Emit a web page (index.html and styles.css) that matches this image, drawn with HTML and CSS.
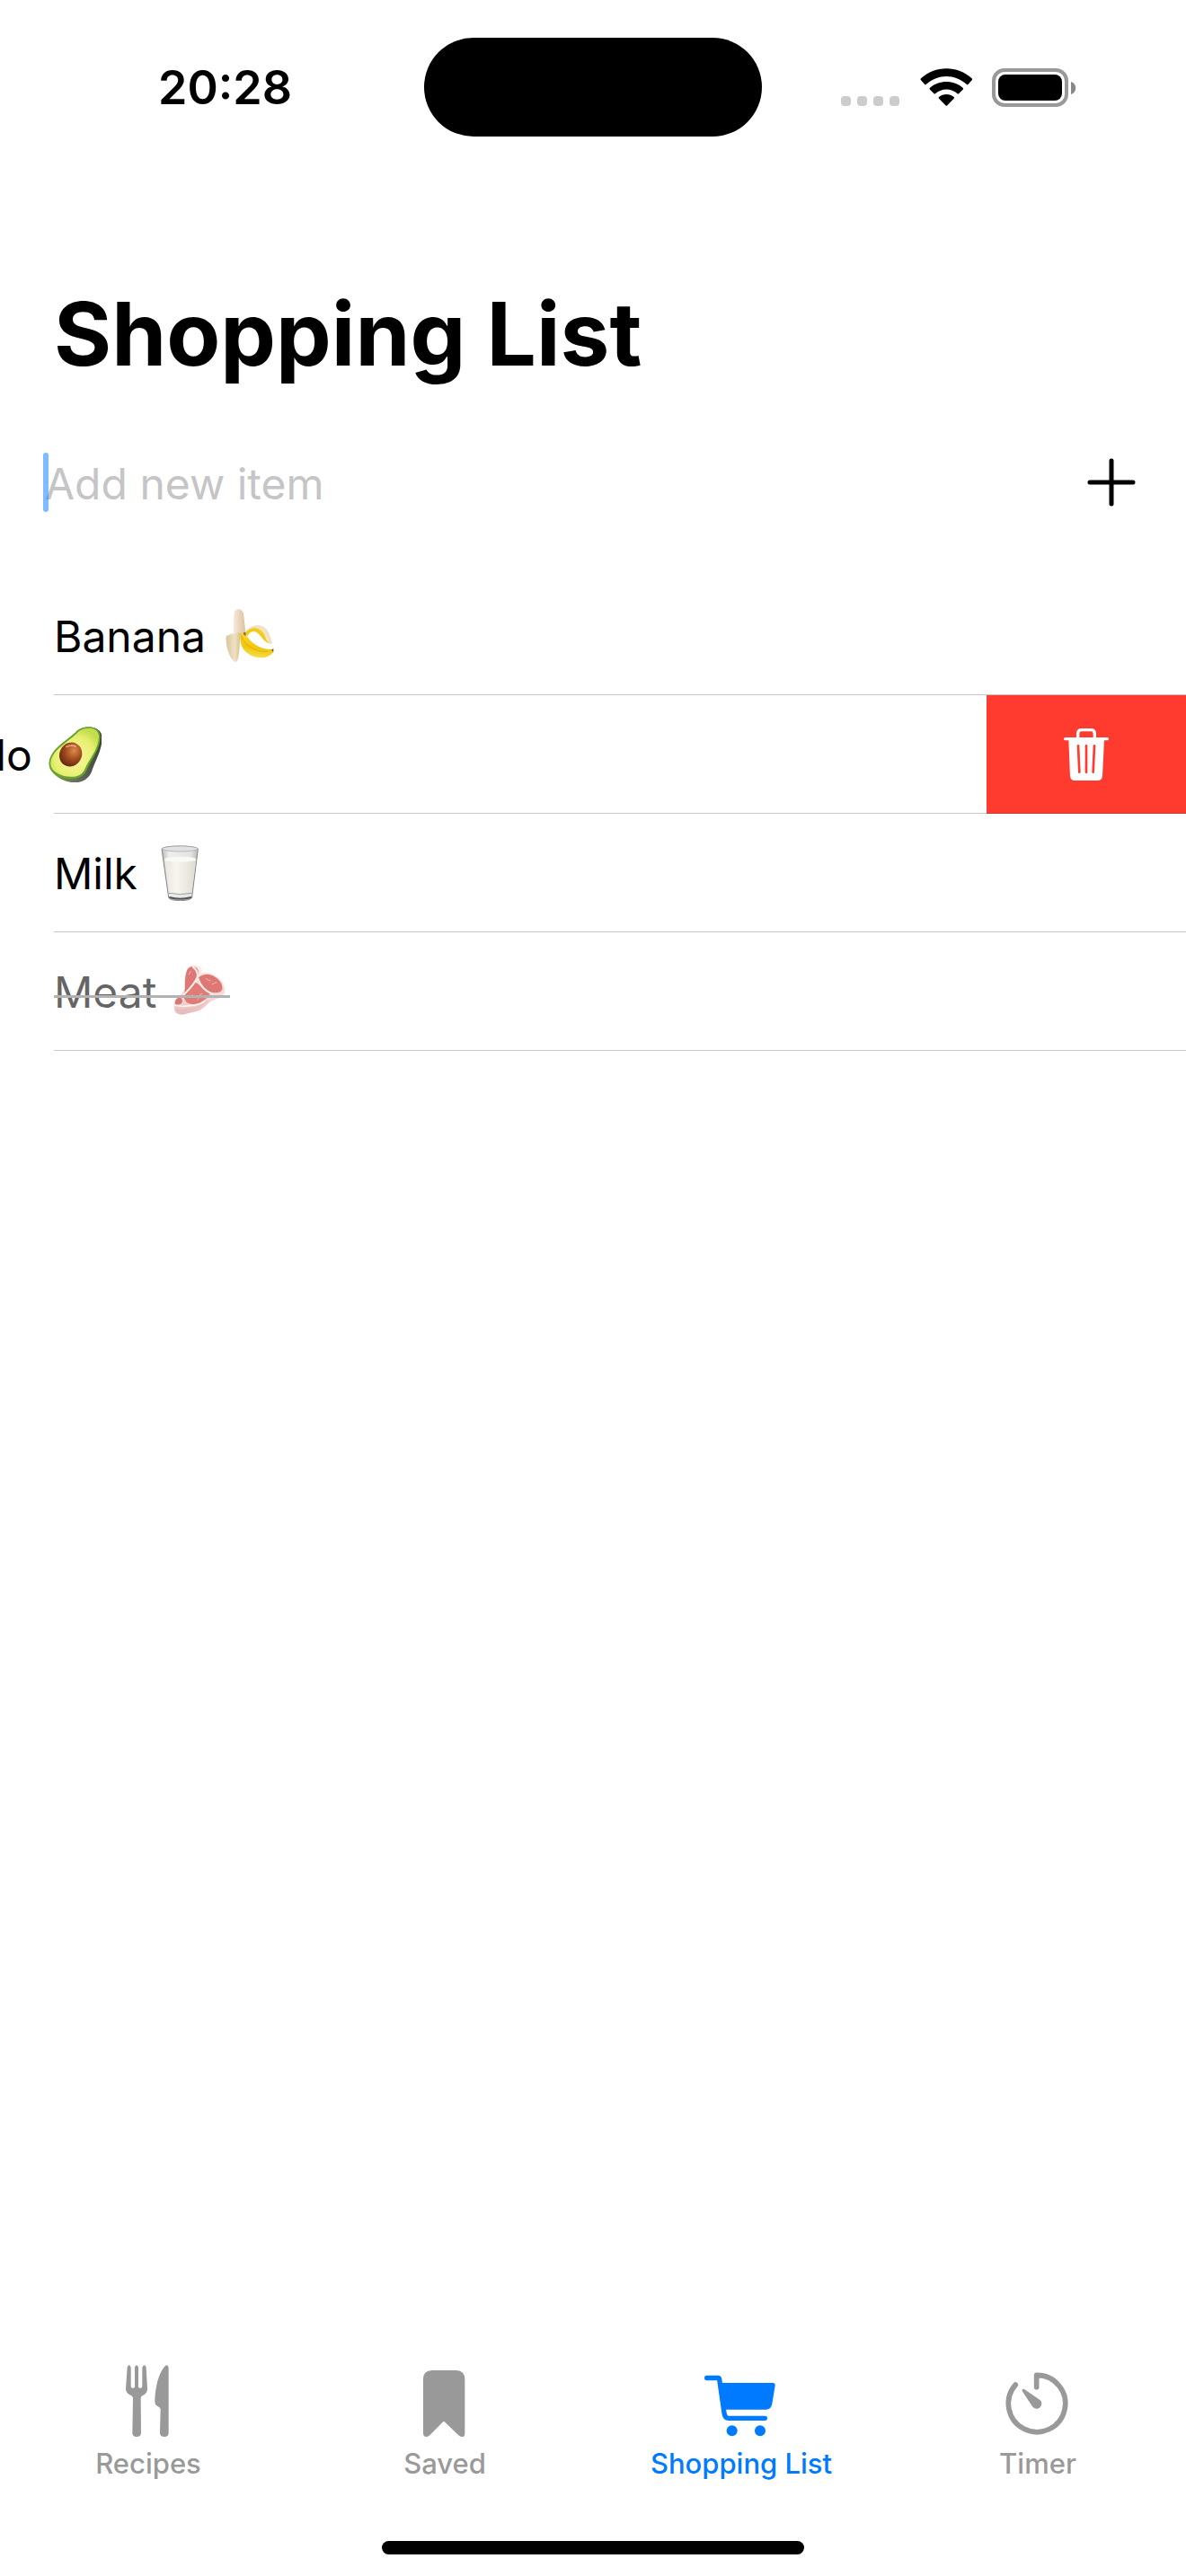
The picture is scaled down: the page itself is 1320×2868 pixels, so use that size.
FILE: index.html
```html
<!DOCTYPE html>
<html lang="en">
<head>
<meta charset="utf-8">
<meta name="viewport" content="width=device-width, initial-scale=1">
<title>Shopping List</title>
<link rel="stylesheet" href="styles.css">
</head>
<body>
<header class="status">
  <time class="clock">20:28</time>
  <div class="island"></div>
  <div class="indicators">
    <svg class="cellular" width="66" height="12" viewBox="0 0 66 12" fill="#ccc" aria-hidden="true">
      <rect x="0" width="11" height="11" rx="4"/><rect x="18" width="11" height="11" rx="4"/><rect x="36" width="11" height="11" rx="4"/><rect x="54" width="11" height="11" rx="4"/>
    </svg>
    <svg width="58" height="43" viewBox="0 0 174 129" aria-hidden="true">
      <path d="M3 40Q0 37 3 34C51-10 125-10 173 34Q176 37 173 40L161 53Q158 56 155 53C116 18 60 18 21 53Q18 56 15 53Z"/>
      <path d="M33 71Q30 68 33 65C63 38 113 38 143 65Q146 68 143 71L130 84Q127 87 124 84C103 66 73 66 52 84Q49 87 46 84Z"/>
      <path d="M63 101Q60 98 63 96C77 84 99 84 113 96Q116 98 113 101L91 124Q88 127 85 124Z"/>
    </svg>
    <svg width="94" height="43" viewBox="0 0 94 43" aria-hidden="true">
      <rect x="2" y="2" width="81" height="39" rx="12" fill="none" stroke="#999" stroke-width="4"/>
      <rect x="7" y="7" width="71" height="29" rx="8"/>
      <path d="M88 15C95 17 95 27 88 29Z" fill="#888"/>
    </svg>
  </div>
</header>

<main class="content">
  <h1 class="title">Shopping List</h1>

  <form class="add">
    <div class="field">
      <input class="add-input" type="text" placeholder="Add new item" aria-label="Add new item">
      <span class="caret"></span>
    </div>
    <button class="add-button" type="button" aria-label="Add">
      <svg width="54" height="54" viewBox="0 0 54 54" fill="none" stroke="#000" stroke-width="5" stroke-linecap="round"><path d="M27 3V51M3 27H51"/></svg>
    </button>
  </form>

  <ul class="items">
    <li class="item">
      <span class="label">Banana
        <svg class="emoji" viewBox="0 0 180 186" role="img" aria-label="banana">
          <defs>
            <linearGradient id="flesh" x1="0" x2="1"><stop offset="0" stop-color="#f6ead9"/><stop offset="1" stop-color="#dcbf9f"/></linearGradient>
            <linearGradient id="inner" x1="0" x2="1"><stop offset="0" stop-color="#d9c49c"/><stop offset=".6" stop-color="#efe2c4"/><stop offset="1" stop-color="#d7bf8e"/></linearGradient>
            <linearGradient id="skin" x1=".6" y1="0" x2=".4" y2="1"><stop offset="0" stop-color="#fbdc3a"/><stop offset=".6" stop-color="#f2c60d"/><stop offset="1" stop-color="#f5e14b"/></linearGradient>
          </defs>
          <path d="M44 16C47 0 70-1 75 18C78 38 79 62 84 92L66 96L43 88C41 62 40 38 44 16Z" fill="url(#flesh)"/>
          <path d="M82 80C100 54 140 44 161 84L171 117Q168 122 160 117C150 91 126 70 108 69C98 70 91 80 84 89Z" fill="#f1e2c5"/>
          <path d="M82 82C96 62 122 62 138 80C150 92 148 110 166 118C140 118 134 84 112 78C100 76 94 84 88 94Z" fill="#f5c918"/>
          <path d="M64 83L82 85C94 113 128 138 164 138L174 138L175 146C158 172 113 171 88 151C68 136 61 109 64 83Z" fill="url(#skin)"/>
          <path d="M68 92C80 128 116 148 156 145" fill="none" stroke="#e0ac08" stroke-width="4" opacity=".6"/>
          <path d="M17 94C34 86 51 82 65 83C61 103 65 145 55 174Q50 184 42 177C25 159 15 127 17 94Z" fill="url(#inner)"/>
          <path d="M65 83L75 105L68 110Z" fill="#edb90d"/>
          <path d="M74 82L82 80L84 92L76 90Z" fill="#8c7a3b"/>
          <path d="M169 138L175 136L175 146L171 145Z" fill="#6c5d2c"/>
        </svg></span>
    </li>
    <li class="item">
      <span class="label swiped">Avocado
        <svg class="emoji" viewBox="0 0 180 186" role="img" aria-label="avocado">
          <defs>
            <radialGradient id="pulp" cx=".5" cy=".6" r=".6"><stop offset="0" stop-color="#fbf6a0"/><stop offset=".7" stop-color="#e6f070"/><stop offset="1" stop-color="#c3dd4d"/></radialGradient>
            <radialGradient id="pit" cx=".55" cy=".3" r=".7"><stop offset="0" stop-color="#de8a4f"/><stop offset=".5" stop-color="#a54e20"/><stop offset="1" stop-color="#632710"/></radialGradient>
            <linearGradient id="rind" x1="0" x2="1"><stop offset="0" stop-color="#74a82c"/><stop offset=".5" stop-color="#6b6f62"/><stop offset="1" stop-color="#3a4436"/></linearGradient>
          </defs>
          <path d="M100 13C122-4 177-5 182 34C183 79 156 118 147 151C130 190 87 194 50 178C22 164 4 145 5 123C9 72 70 46 100 13Z" fill="url(#rind)"/>
          <path d="M100 12C122-5 173-6 176 31C178 75 144 112 131 144C117 177 82 178 48 170C20 160 4 145 5 121C9 71 70 45 100 12Z" fill="#69a22c"/>
          <path d="M102 17C124 0 168-1 171 31C173 72 138 108 125 140C113 170 80 171 52 164C25 156 8 141 10 120C14 75 76 48 102 17Z" fill="url(#pulp)"/>
          <ellipse cx="77" cy="93" rx="37" ry="41" transform="rotate(28 77 93)" fill="url(#pit)"/>
          <path d="M63 67Q79 59 93 66" fill="none" stroke="#f3b98b" stroke-width="6" stroke-linecap="round" opacity=".7"/>
        </svg></span>
      <button class="delete" type="button" aria-label="Delete">
        <svg width="50" height="58" viewBox="0 0 150 174" aria-hidden="true">
          <path d="M47 33V17Q47 5 59 5H91Q103 5 103 17V33" fill="none" stroke="#fff" stroke-width="10"/>
          <path d="M5 35H145" stroke="#fff" stroke-width="10" stroke-linecap="round"/>
          <path d="M16 37H135L129 158Q128 174 113 174H37Q22 174 21 158Z" fill="#fff"/>
          <path d="M48 58L52 146M75 58V146M102 58L98 146" stroke="#ff3b30" stroke-width="8" stroke-linecap="round"/>
        </svg>
      </button>
    </li>
    <li class="item">
      <span class="label">Milk
        <svg class="emoji" viewBox="0 0 180 186" role="img" aria-label="glass of milk">
          <defs>
            <linearGradient id="glass" x1="0" x2="1"><stop offset="0" stop-color="#b9b9b9"/><stop offset=".2" stop-color="#eee"/><stop offset=".8" stop-color="#e4e4e4"/><stop offset="1" stop-color="#bbb"/></linearGradient>
            <linearGradient id="milk" x1="0" x2="1"><stop offset="0" stop-color="#e9e7e0"/><stop offset=".4" stop-color="#f7f5ee"/><stop offset="1" stop-color="#dedbd1"/></linearGradient>
          </defs>
          <path d="M30 12C42 0 139 0 151 12L131 174Q129 184 92 185Q54 184 53 174Z" fill="url(#glass)" stroke="#858585" stroke-width="3"/>
          <path d="M39 47Q91 32 145 47L130 161Q91 168 55 161Z" fill="url(#milk)"/>
          <ellipse cx="92" cy="47" rx="52" ry="9" fill="#faf9f5"/>
          <path d="M54 160Q92 168 130 160" fill="none" stroke="#777" stroke-width="2"/>
          <path d="M55 174Q92 185 129 174" fill="none" stroke="#555" stroke-width="6"/>
          <ellipse cx="91" cy="12" rx="60" ry="9" fill="#e2e2e2" stroke="#a2a2a2" stroke-width="2"/>
        </svg></span>
    </li>
    <li class="item">
      <span class="label done">Meat
        <svg class="emoji" viewBox="0 0 180 186" role="img" aria-label="cut of meat">
          <defs>
            <linearGradient id="fat" x1="0" y1="0" x2="0" y2="1"><stop offset="0" stop-color="#ffe0d8"/><stop offset=".7" stop-color="#f3bdb7"/><stop offset="1" stop-color="#d08a8a"/></linearGradient>
          </defs>
          <path d="M56 9C67-2 88 5 99 18L97 31C119 22 149 39 166 60Q179 80 173 99C166 118 139 115 121 131C106 145 92 158 69 161L34 170Q8 169 6 152L5 130C15 108 36 98 42 84C38 54 43 26 56 9Z" fill="url(#fat)"/>
          <path d="M49 20C58 4 82 6 86 24C90 42 72 71 52 88L38 98C46 84 36 50 49 20Z" fill="#c9201b"/>
          <path d="M92 42C121 24 152 45 163 66C173 91 160 98 138 97C116 95 98 78 88 64C82 54 84 47 92 42Z" fill="#c9201b"/>
          <path d="M74 62C90 62 106 96 126 99C112 123 88 137 65 135C42 134 41 117 34 106Z" fill="#cc241f"/>
          <path d="M9 124C18 106 31 111 33 124C34 136 14 140 9 134Z" fill="#c2201c"/>
          <path d="M38 103C62 80 77 61 83 44Q86 24 69 11M85 49C93 77 112 92 132 101" fill="none" stroke="#ffe6df" stroke-width="6" stroke-linecap="round"/>
          <path d="M6 138Q36 145 56 140Q90 139 108 123" fill="none" stroke="#fff0ea" stroke-width="5"/>
          <path d="M10 155Q37 158 61 151Q92 147 119 124" fill="none" stroke="#d68989" stroke-width="3"/>
          <path d="M112 50L126 57M133 68L147 62M66 104L70 110M91 103L99 100M55 35L61 25M83 121L87 115" stroke="#ed8884" stroke-width="3" stroke-linecap="round"/>
        </svg></span>
    </li>
  </ul>
</main>

<nav class="tabs">
  <a class="tab" href="#recipes">
    <svg class="tab-icon" viewBox="0 0 240 240" aria-hidden="true">
      <path d="M50 8Q56-6 62 8V72Q62 77 67 77H70Q75 77 75 72V8Q81-6 87 8V72Q87 77 92 77H95Q100 77 100 72V8Q107-6 113 8L117 80Q117 96 100 103Q95 106 95 112L96 228Q95 240 81 240Q68 240 67 228L69 112Q69 106 64 103Q45 94 45 80Z"/>
      <path d="M188 8V228Q187 240 174 240Q160 240 159 228L161 149Q161 144 157 142L150 137Q141 132 142 116C144 71 155 29 174 6Q183-5 188 8Z"/>
    </svg>
    Recipes
  </a>
  <a class="tab" href="#saved">
    <svg class="tab-icon" viewBox="0 0 240 240" aria-hidden="true">
      <path d="M48 48Q48 18 78 18H157Q187 18 187 48V230Q187 240 177 240Q171 240 166 235L121 191Q117 187 113 191L70 235Q65 240 59 240Q48 240 48 229Z"/>
    </svg>
    Saved
  </a>
  <a class="tab active" href="#shopping" aria-current="page">
    <svg class="tab-icon" viewBox="0 0 240 240" aria-hidden="true">
      <path d="M5 43.500H42Q46 43 47 48L63 160Q65 178 78 178H199" fill="none" stroke="currentColor" stroke-width="16" stroke-linecap="round" stroke-linejoin="round"/>
      <path d="M53 60H226Q234 61 233 69L223 130Q220 149 203 149H64Z"/>
      <circle cx="89" cy="220" r="18"/><circle cx="183" cy="220" r="18"/>
    </svg>
    Shopping List
  </a>
  <a class="tab" href="#timer">
    <svg class="tab-icon" viewBox="0 0 240 240" aria-hidden="true">
      <path d="M116 74V34A95 95 0 1 1 46 66" fill="none" stroke="currentColor" stroke-width="17" stroke-linecap="round" stroke-linejoin="round"/>
      <path d="M68 87Q66 79 75 81L124 115Q133 120 133 130Q131 145 117 147Q108 147 102 139Z"/>
    </svg>
    Timer
  </a>
</nav>
<div class="home-indicator"></div>
</body>
</html>
```

FILE: styles.css
```css
* {
  box-sizing: border-box;
}

body {
  margin: 0;
  min-height: 100vh;
  display: flex;
  flex-direction: column;
  overflow-x: hidden;
  background: #fff;
  color: #000;
  font-family: Inter, "Liberation Sans", sans-serif;
  font-size: 48px;
}

button {
  display: flex;
  align-items: center;
  justify-content: center;
  padding: 0;
  border: 0;
  background: none;
}

.status {
  display: grid;
  grid-template-columns: 1fr 376px 1fr;
  align-items: center;
  padding-top: 42px;
}

.clock {
  padding-left: 176px;
  font-size: 52px;
  font-weight: 600;
}

.island {
  height: 110px;
  border-radius: 55px;
  background: #000;
}

.indicators {
  display: flex;
  align-items: center;
  justify-content: flex-end;
  gap: 22px;
  padding-right: 122px;
}

.cellular {
  align-self: flex-end;
}

.content {
  flex: 1;
}

.title {
  margin: 160px 60px 0;
  font-size: 98px;
  line-height: 120px;
  font-weight: 700;
}

.add {
  display: flex;
  align-items: center;
  height: 210px;
  padding: 0 56px 0 50px;
}

.field {
  position: relative;
  flex: 1;
}

.add-input {
  display: block;
  width: 100%;
  height: 66px;
  padding: 2px 0 0;
  border: 0;
  outline: 0;
  background: none;
  color: #000;
  font: inherit;
}

.add-input::placeholder {
  color: #c5c5c7;
  opacity: 1;
}

.caret {
  position: absolute;
  top: 0;
  left: -2px;
  width: 6px;
  height: 66px;
  border-radius: 3px;
  background: rgb(0 122 255 / 50%);
}

.items {
  margin: 0 0 0 60px;
  padding: 0;
  list-style: none;
}

.item {
  display: flex;
  align-items: center;
  height: 132px;
  border-bottom: 1px solid #c6c6c8;
}

.label {
  position: relative;
  padding-top: 3px;
  line-height: 64px;
  white-space: nowrap;
}

.emoji {
  width: 60px;
  height: 62px;
  margin: 0 4px;
  vertical-align: -13px;
}

.swiped {
  margin-left: -222px;
}

.delete {
  width: 222px;
  height: 132px;
  margin: 0 0 -1px auto;
  border-bottom: 1px solid #c63b34;
  background: #ff3b30;
}

.done {
  opacity: .6;
}

.done::after {
  content: "";
  position: absolute;
  left: 0;
  right: 0;
  top: 38px;
  height: 3px;
  background: #808080;
}

.tabs {
  display: grid;
  grid-template-columns: repeat(4, 1fr);
  padding-bottom: 68px;
}

.tab {
  display: flex;
  flex-direction: column;
  align-items: center;
  gap: 12px;
  color: #999;
  font-size: 31px;
  line-height: 36px;
  font-weight: 500;
  text-decoration: none;
}

.tab-icon {
  width: 80px;
  height: 80px;
  overflow: visible;
  fill: currentColor;
}

.active {
  color: #007aff;
}

.home-indicator {
  align-self: center;
  width: 470px;
  max-width: 60%;
  height: 15px;
  margin-bottom: 24px;
  border-radius: 8px;
  background: #000;
}
```
